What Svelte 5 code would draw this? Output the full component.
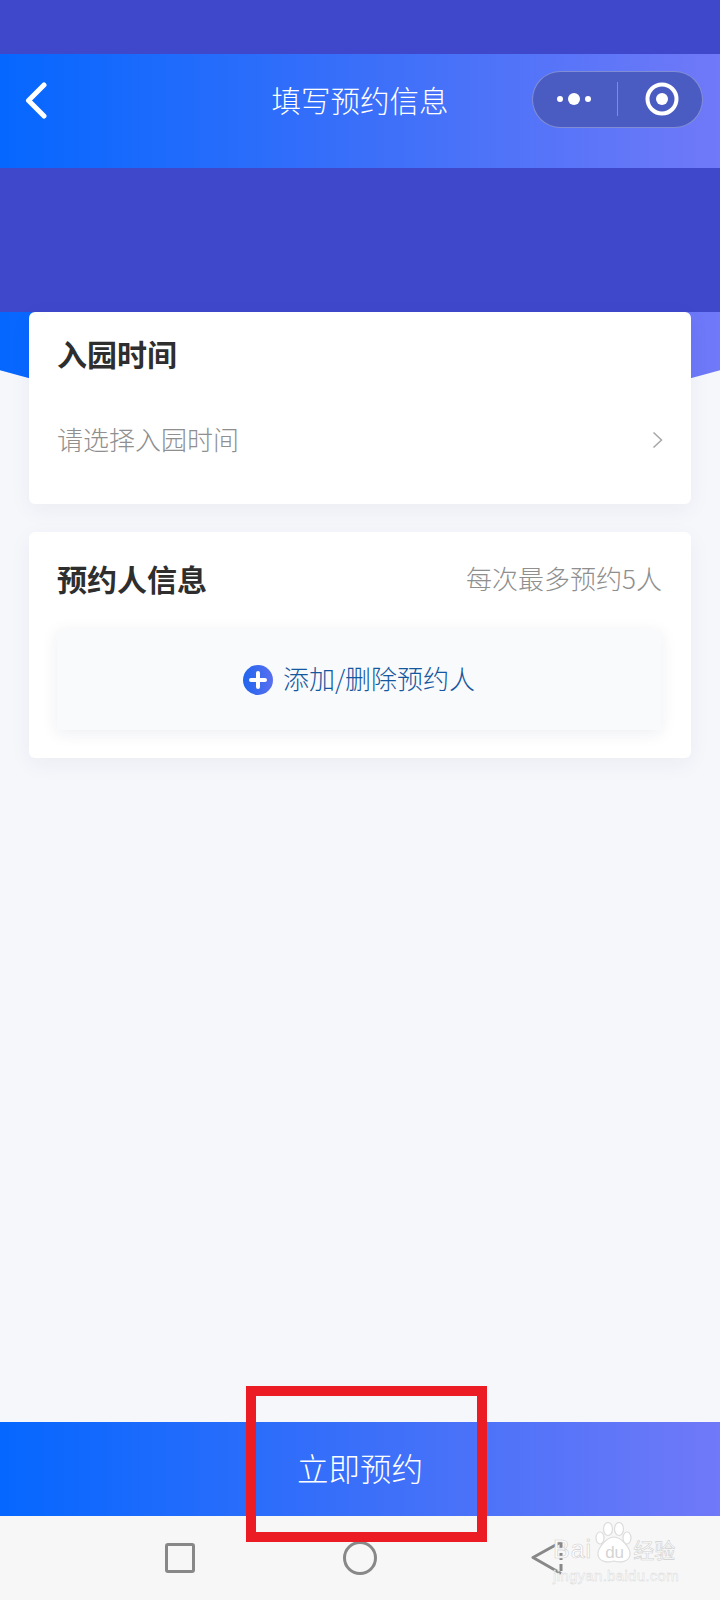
<script>
  const cjk = '添加/删除预约人';
</script>

<div class="page">
  <div class="band status"></div>
  <header class="topbar">
    <svg class="back" width="22" height="37" viewBox="0 0 22 37">
      <path d="M19 3 L3.500 18.500 L19 34" fill="none" stroke="#fff" stroke-width="5" stroke-linecap="round" stroke-linejoin="round" />
    </svg>
    <h1>填写预约信息</h1>
    <div class="capsule">
      <div class="dots"><i></i><i class="big"></i><i></i></div>
      <span class="divider"></span>
      <svg class="target" width="34" height="34" viewBox="0 0 34 34">
        <circle cx="17" cy="17" r="14.500" fill="none" stroke="#fff" stroke-width="4" />
        <circle cx="17" cy="17" r="6" fill="#fff" />
      </svg>
    </div>
  </header>
  <div class="band spacer"></div>

  <main>
    <div class="arc"></div>
    <section class="card first">
      <h2>入园时间</h2>
      <div class="picker">
        <span>请选择入园时间</span>
        <svg width="11" height="18" viewBox="0 0 11 18">
          <path d="M1.500 1.500 L9.500 9 L1.500 16.500" fill="none" stroke="#a6a6a6" stroke-width="1.500" />
        </svg>
      </div>
    </section>
    <section class="card second">
      <div class="head">
        <h2>预约人信息</h2>
        <span class="hint">每次最多预约5人</span>
      </div>
      <div class="add">
        <svg width="30" height="30" viewBox="0 0 30 30">
          <defs>
            <linearGradient id="plus-bg" x1="0" x2="1" y1="0" y2="0">
              <stop offset="0" stop-color="#1f66ee" />
              <stop offset="1" stop-color="#5a6ff0" />
            </linearGradient>
          </defs>
          <circle cx="15" cy="15" r="15" fill="url(#plus-bg)" />
          <path d="M15 8 V22 M8 15 H22" stroke="#fff" stroke-width="4" stroke-linecap="round" />
        </svg>
        <span class="add-label">{cjk}</span>
      </div>
    </section>
  </main>

  <button class="submit"><span>立即预约</span></button>

  <nav>
    <span class="square"></span>
    <span class="round"></span>
    <svg class="tri" width="32" height="36" viewBox="0 0 32 36">
      <path d="M30 2 L2 17.500 L30 33.500" fill="none" stroke="#888" stroke-width="3" stroke-linejoin="round" />
      <path d="M30 2 V33.500" fill="none" stroke="#888" stroke-width="3" stroke-dasharray="7 4" />
    </svg>
  </nav>

  <div class="highlight"></div>

  <div class="watermark">
    <div class="brand">
      <span class="bai">Bai</span>
      <span class="paw">
        <svg width="42" height="42" viewBox="0 0 42 42">
          <g fill="#fff" stroke="#dcdcdc" stroke-width="1.200">
            <ellipse cx="7" cy="16" rx="4" ry="6" />
            <ellipse cx="15" cy="7" rx="4.500" ry="6.500" />
            <ellipse cx="26" cy="7" rx="4.500" ry="6.500" />
            <ellipse cx="34" cy="16" rx="4" ry="6" />
            <path d="M21 15 C28 15 38 26 37 33 C36 40 27 41 21 39 C15 41 6 40 5 33 C4 26 14 15 21 15 Z" />
          </g>
        </svg>
        <b>du</b>
      </span>
      <span class="jy">经验</span>
    </div>
    <div class="url">jingyan.baidu.com</div>
  </div>
</div>

<style>
  :global(body) {
    margin: 0;
  }

  .page {
    background: #f5f7fb;
    color: #2e2e2e;
    display: flex;
    flex-direction: column;
    font-family: "Noto Sans CJK SC", "Noto Sans", sans-serif;
    height: 1600px;
    overflow: hidden;
    position: relative;
    width: 720px;
  }

  .band {
    background: #3f47cb;
    flex: none;
  }

  .status {
    height: 54px;
  }

  .spacer {
    height: 144px;
  }

  .topbar {
    align-items: center;
    background: linear-gradient(90deg, #0567ff, #3a6ff9 50%, #7079f8);
    box-sizing: border-box;
    display: grid;
    flex: none;
    grid-template-columns: 1fr auto 1fr;
    height: 114px;
    padding: 0 17px 24px;
  }

  .back {
    margin-left: 8px;
    margin-top: 3px;
  }

  h1 {
    color: #fff;
    font-size: 29.500px;
    font-weight: 300;
    line-height: 40px;
    margin: 0;
  }

  .capsule {
    align-items: center;
    background: #4a5cc2;
    border: 1px solid rgba(255, 255, 255, 0.3);
    border-radius: 29px;
    box-sizing: border-box;
    display: flex;
    height: 57px;
    justify-self: end;
    width: 171px;
  }

  .dots {
    align-items: center;
    display: flex;
    gap: 5px;
    margin-left: 24px;
  }

  .dots i {
    background: #fff;
    border-radius: 50%;
    height: 6px;
    width: 6px;
  }

  .dots .big {
    height: 12px;
    width: 12px;
  }

  .divider {
    background: rgba(255, 255, 255, 0.3);
    height: 34px;
    margin-left: 26px;
    width: 1px;
  }

  .target {
    margin-left: 27px;
  }

  main {
    box-sizing: border-box;
    display: flex;
    flex: 1;
    flex-direction: column;
    gap: 28px;
    padding: 0 29px;
    position: relative;
  }

  .arc {
    background: linear-gradient(90deg, #0567ff, #3a6ff9 50%, #7079f8);
    clip-path: ellipse(1330px 1330px at 360px -1222px);
    height: 110px;
    left: 0;
    position: absolute;
    right: 0;
    top: 0;
  }

  .card {
    background: #fff;
    border-radius: 6px;
    box-shadow: 0 6px 22px rgba(30, 40, 90, 0.05);
    position: relative;
  }

  .second {
    padding: 26px 0 28px 28px;
  }

  .first {
    padding: 21px 28px 45px;
  }

  h2 {
    font-size: 30px;
    font-weight: 700;
    line-height: 40px;
    margin: 0;
  }

  .picker {
    align-items: center;
    color: #8f8f8f;
    display: flex;
    font-size: 26px;
    font-weight: 300;
    justify-content: space-between;
    line-height: 40px;
    margin-top: 46px;
  }

  .picker svg {
    margin-top: 2px;
  }

  .head {
    align-items: center;
    display: flex;
    justify-content: space-between;
    padding-right: 29px;
  }

  .hint {
    color: #8f8f8f;
    font-size: 26px;
    font-weight: 300;
    line-height: 40px;
  }

  .add {
    align-items: center;
    background: #f9fafb;
    box-shadow: 0 3px 16px rgba(30, 40, 90, 0.08);
    box-sizing: border-box;
    color: #15589f;
    display: flex;
    font-size: 26px;
    font-weight: 300;
    gap: 10px;
    height: 100px;
    justify-content: center;
    margin: 32px 30px 0 0;
  }

  .add-label {
    line-height: 40px;
    margin-bottom: 4px;
  }

  .submit {
    background: linear-gradient(90deg, #0567ff, #3a6ff9 50%, #7079f8);
    border: 0;
    color: #fff;
    flex: none;
    font-family: inherit;
    font-size: 31.500px;
    font-weight: 300;
    height: 94px;
    padding: 0 0 4px;
    width: 100%;
  }

  nav {
    align-items: center;
    background: #f7f7f7;
    display: flex;
    flex: none;
    height: 84px;
    padding-left: 165px;
  }

  .square {
    border: 3px solid #888;
    border-radius: 3px;
    box-sizing: border-box;
    height: 30px;
    margin-top: -1px;
    width: 30px;
  }

  .round {
    border: 3px solid #888;
    border-radius: 50%;
    box-sizing: border-box;
    height: 34px;
    margin-left: 148px;
    margin-top: -1px;
    width: 34px;
  }

  .tri {
    margin-left: 154px;
    margin-top: -1px;
  }

  .highlight {
    border: 10px solid #ec1c24;
    box-sizing: border-box;
    height: 156px;
    left: 246px;
    position: absolute;
    top: 1386px;
    width: 241px;
  }

  .watermark {
    color: #fff;
    font-family: "Liberation Sans", sans-serif;
    left: 553px;
    pointer-events: none;
    position: absolute;
    top: 1522px;
    width: 130px;
    -webkit-text-stroke: 0.6px #d0d0d0;
  }

  .brand {
    align-items: flex-end;
    display: flex;
    height: 42px;
  }

  .bai {
    font-size: 25px;
    letter-spacing: 1px;
    line-height: 28px;
    margin-bottom: 1px;
  }

  .paw {
    height: 42px;
    margin-left: 1px;
    position: relative;
    width: 40px;
  }

  .paw b {
    bottom: 1px;
    color: #d4d4d4;
    font-size: 17px;
    font-weight: 400;
    left: 12px;
    position: absolute;
    -webkit-text-stroke: 0;
  }

  .jy {
    font-family: "Noto Sans CJK SC", sans-serif;
    font-size: 21px;
    line-height: 26px;
    margin-bottom: 2px;
    white-space: nowrap;
  }

  .url {
    font-size: 15px;
    letter-spacing: 0.300px;
    line-height: 16px;
    margin-top: 4px;
    white-space: nowrap;
    -webkit-text-stroke: 0.4px #d4d4d4;
  }
</style>
